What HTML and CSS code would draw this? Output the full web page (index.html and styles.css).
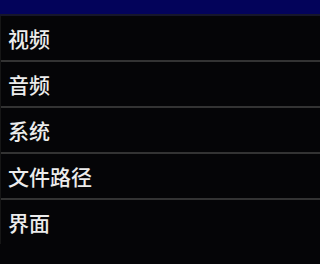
FILE: index.html
```html
<!DOCTYPE html>
<html lang="zh">
<head>
<meta charset="utf-8">
<link rel="stylesheet" href="styles.css">
</head>
<body>
<div class="screen">
  <div class="titlebar"></div>
  <ul class="menu">
    <li class="item">视频</li>
    <li class="item">音频</li>
    <li class="item">系统</li>
    <li class="item">文件路径</li>
    <li class="item">界面</li>
  </ul>
</div>
</body>
</html>
```
FILE: styles.css
```css
html, body {
  margin: 0;
  padding: 0;
  background: #050507;
}
.screen {
  width: 100%;
  height: 264px;
  display: flex;
  flex-direction: column;
  background: #050507;
  font-family: "Noto Sans CJK SC", "Noto Sans", sans-serif;
}
.titlebar {
  height: 14px;
  background: #03035a;
  border-bottom: 2px solid #16162a;
}
.menu {
  list-style: none;
  margin: 0;
  padding: 0;
  border-left: 1px solid #161616;
}
.item {
  height: 44px;
  display: flex;
  align-items: center;
  padding-left: 7px;
  font-size: 21px;
  font-weight: 500;
  color: #ececec;
  border-bottom: 2px solid #333333;
}
.item:last-child {
  border-bottom: none;
}
```
